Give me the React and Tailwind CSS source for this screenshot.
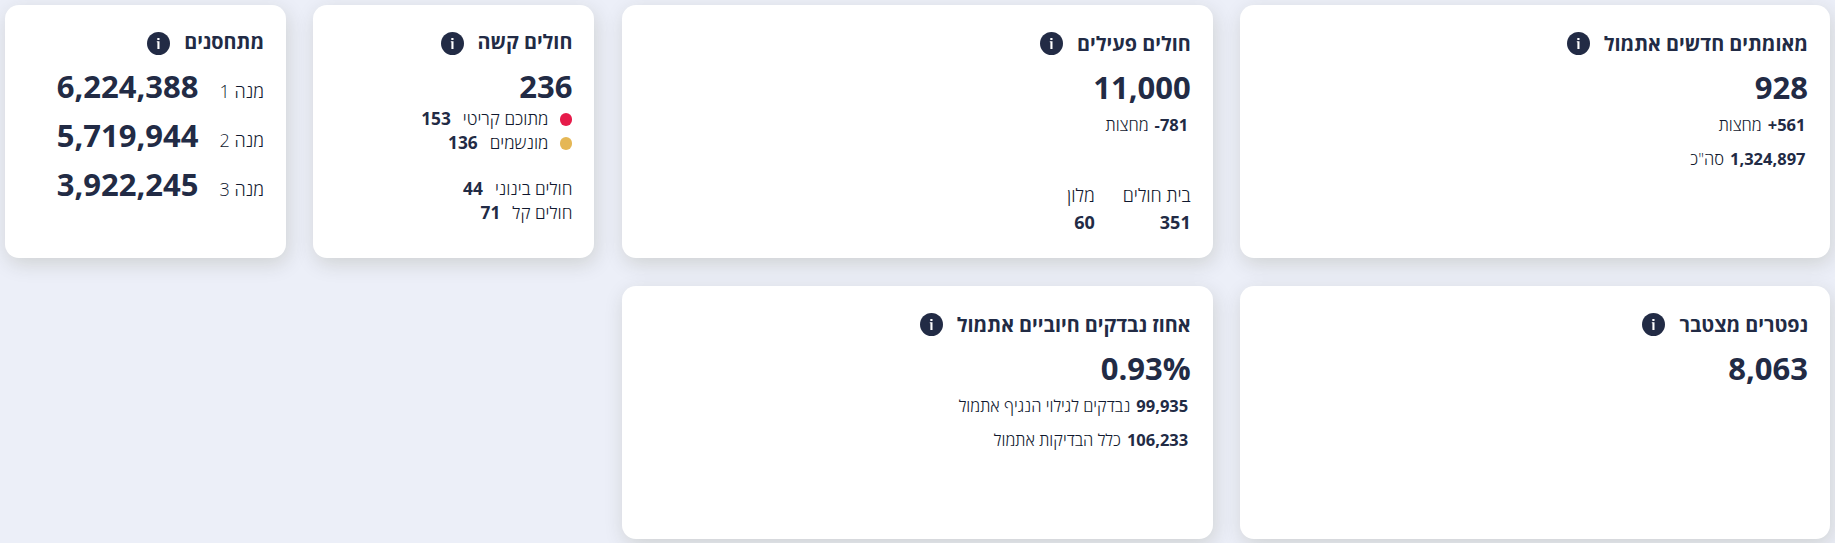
import clsx from 'clsx';

const InfoIcon = () => (
  <svg viewBox="0 0 23 23" className="h-[23px] w-[23px] shrink-0" aria-hidden="true">
    <circle cx="11.5" cy="11.5" r="11.5" fill="#222b45" />
    <rect x="10.3" y="6" width="2.2" height="2" fill="#fff" />
    <path d="M9.8 9.3h2.7v7.7h-2.1v-6.7h-.6z" fill="#fff" />
  </svg>
);

function Card({ title, wide, children }) {
  return (
    <section className="h-[253px] rounded-[14px] bg-white px-[22px] pt-[27px] shadow-[2px_6px_20px_rgba(50,45,10,0.15)]">
      <header className="flex h-[23px] items-center gap-[14px]">
        <h2 className={clsx('text-[19.8px] leading-[23px] font-bold', wide ? '-mt-px' : '-mt-[5px]')}>{title}</h2>
        <InfoIcon />
      </header>
      <div className={clsx(wide ? 'pt-[10px]' : 'pt-[9px]')}>{children}</div>
    </section>
  );
}

const Total = ({ children }) => (
  <div className="h-[43px] text-[31px] leading-[44px] font-bold">{children}</div>
);

const SubLine = ({ value, label }) => (
  <div className="flex h-[34px] items-center gap-[6px] px-[2.5px] text-[16.5px]">
    <bdi dir="ltr" className="font-bold">{value}</bdi>
    <span className="font-light text-[#10182e]">{label}</span>
  </div>
);

const SevereLine = ({ color, label, value }) => (
  <div className="flex h-6 items-center gap-3 text-[17.3px]">
    {color && <span className={clsx('h-[13px] w-3 rounded-full', color)} />}
    <span className="font-light text-[#10182e]">{label}</span>
    <span className="font-bold">{value}</span>
  </div>
);

const doses = [
  { label: 'מנה 1', value: '6,224,388' },
  { label: 'מנה 2', value: '5,719,944' },
  { label: 'מנה 3', value: '3,922,245' },
];

const places = [
  { label: 'בית חולים', value: '351' },
  { label: 'מלון', value: '60' },
];

export default function App() {
  return (
    <div
      dir="rtl"
      className="h-[543px] overflow-hidden bg-[#eceff8] p-[5px] font-['Open_Sans',sans-serif] text-[#222b45]"
    >
      <div className="grid grid-cols-[590px_591px_281px_281px] gap-x-[27.3px] gap-y-7">
        <Card title="מאומתים חדשים אתמול" wide>
          <Total>928</Total>
          <SubLine value="+561" label="מחצות" />
          <SubLine value="1,324,897" label={'סה"כ'} />
        </Card>

        <Card title="חולים פעילים" wide>
          <Total>11,000</Total>
          <SubLine value="-781" label="מחצות" />
          <div className="mt-[40px] flex gap-[28px] text-lg">
            {places.map((place) => (
              <div key={place.label}>
                <div className="h-[27px] leading-[27px] font-light text-[#10182e]">{place.label}</div>
                <div className="h-[27px] leading-[27px] font-bold">{place.value}</div>
              </div>
            ))}
          </div>
        </Card>

        <Card title="חולים קשה">
          <Total>236</Total>
          <SevereLine color="bg-[#e61b4a]" label="מתוכם קריטי" value="153" />
          <SevereLine color="bg-[#e5b755]" label="מונשמים" value="136" />
          <div className="mt-[22px]">
            <SevereLine label="חולים בינוני" value="44" />
            <SevereLine label="חולים קל" value="71" />
          </div>
        </Card>

        <Card title="מתחסנים">
          {doses.map((dose) => (
            <div key={dose.label} className="flex h-[49px] items-baseline gap-[21px]">
              <span className="text-lg font-light text-[#10182e]">{dose.label}</span>
              <span className="text-[31px] leading-[44px] font-bold">{dose.value}</span>
            </div>
          ))}
        </Card>

        <Card title="נפטרים מצטבר" wide>
          <Total>8,063</Total>
        </Card>

        <Card title="אחוז נבדקים חיוביים אתמול" wide>
          <Total>
            <bdi dir="ltr">0.93%</bdi>
          </Total>
          <SubLine value="99,935" label="נבדקים לגילוי הנגיף אתמול" />
          <SubLine value="106,233" label="כלל הבדיקות אתמול" />
        </Card>
      </div>
    </div>
  );
}
